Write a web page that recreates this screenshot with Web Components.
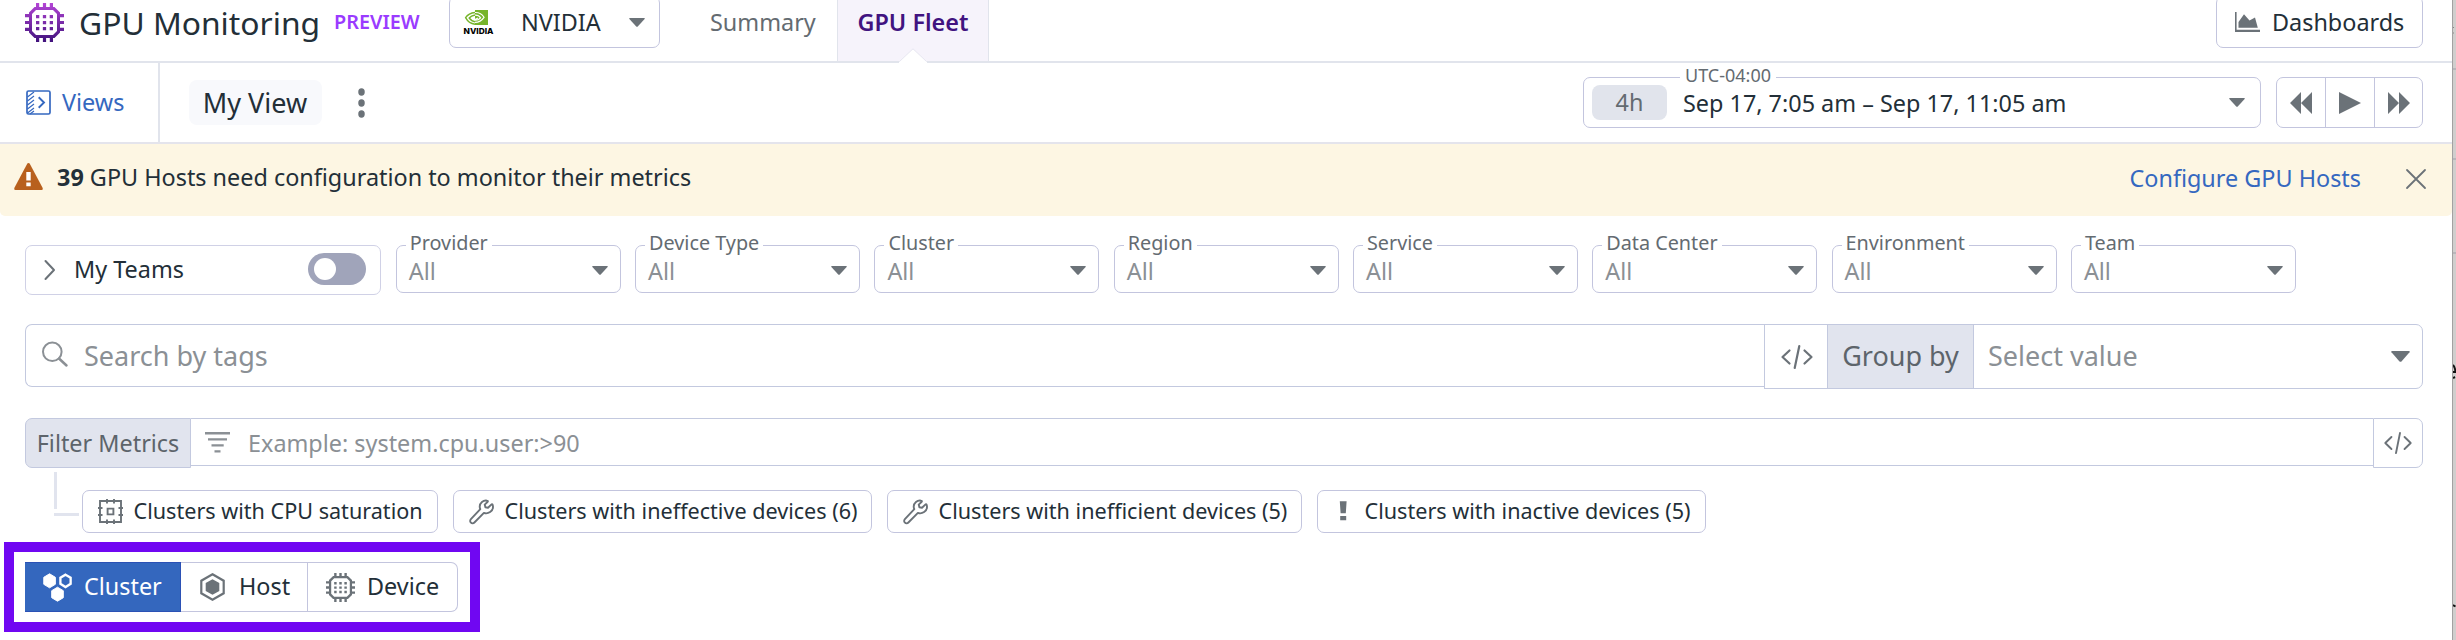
<!DOCTYPE html>
<html lang="en">
<head>
<meta charset="utf-8">
<title>GPU Monitoring</title>
<style>
html,body{margin:0;padding:0}
body{width:2456px;height:640px;overflow:hidden;background:#fff;color:#232f38;font-family:"Noto Sans","Open Sans",sans-serif;font-size:23.4px}
</style>
</head>
<body>
<gm-app></gm-app>
<script>
const ICONS = {
  chip: ['0 0 39 39', `<defs><linearGradient id="g" x1="0" y1="0" x2="0" y2="1" gradientUnits="objectBoundingBox"><stop offset="0" stop-color="#b445d6"/><stop offset="1" stop-color="#40127c"/></linearGradient></defs>
    <path fill="var(--chip-fill, url(#g))" fill-rule="evenodd" d="M11 0h3.2v4h3.7V0h3.2v4h3.7V0H28v4h1.5L35 9.500V11h4v3.200h-4v3.700h4v3.200h-4v3.700h4V28h-4v1.500L29.500 35H28v4h-3.200v-4h-3.700v4h-3.200v-4h-3.700v4H11v-4H9.500L4 29.500V28H0v-3.200h4v-3.700H0v-3.200h4v-3.700H0V11h4V9.500L9.500 4H11zM11 7L7 11v17l4 4h17l4-4V11l-4-4z
    M11 12h3.300v3.300H11zM17.850 12h3.300v3.300h-3.300zM24.700 12H28v3.300h-3.300zM11 18h3.300v3.300H11zM17.850 18h3.300v3.300h-3.300zM24.700 18H28v3.300h-3.300zM11 24h3.300v3.300H11zM17.850 24h3.300v3.300h-3.300zM24.700 24H28v3.300h-3.300z"/>`],
  nvidia: ['0 0 31 24', `<path fill="#76b42a" d="M12 0h13v15H12z"/><path d="M12 2.500C7 3 4 5.500 2.600 7.600 4.500 11.200 8 13.800 12 14.200" fill="none" stroke="#76b42a" stroke-width="1.400"/><path d="M12 5C8.800 5.500 7 7 6.200 8c1.400 2 3.200 3.400 5.800 3.700" fill="none" stroke="#76b42a" stroke-width="1.400"/><path d="M12 2.500c4.500-.2 7.500 2.300 9 4.800-2 3-5 5-9 5M12 5.200c3-.1 4.700 1.300 5.600 2.700-1.300 1.500-3.400 2.500-5.600 2.300M10 8l2 1.500L15 8" fill="none" stroke="#fff" stroke-width="1.200"/><text x="0.500" y="23.500" font-family="Inter,sans-serif" font-weight="800" font-size="8.200" fill="#000" textLength="30" lengthAdjust="spacingAndGlyphs">NVIDIA</text>`],
  caret: ['0 0 16 9', `<path fill="currentColor" d="M.8 0h14.400q1 .1.400 1L9 8.300q-1 1-2 0L.4 1Q-.2.1.8 0z"/>`],
  chart: ['0 0 25 20', `<path fill="currentColor" d="M0 0h1.600v17.800H25V20H0zM3.500 15.800V10L9 2.200l5.500 6.300L20 5.500l2.800 10.300z"/>`],
  views: ['0 0 25 25', `<rect x="1" y="1" width="23" height="23" rx="1.500" fill="none" stroke="currentColor" stroke-width="1.700"/><path d="M1.500 7l6.500-5M1.500 11l6.500-5M1.500 15L8 10M1.500 19L8 14M1.500 23L8 18M4 24l4-3" fill="none" stroke="currentColor" stroke-width="1.200"/><path d="M12.700 7.300l5.300 5.200-5.300 5.200" fill="none" stroke="currentColor" stroke-width="1.900"/>`],
  dots: ['0 0 8 30', `<g fill="currentColor"><circle cx="4" cy="4" r="3.700"/><circle cx="4" cy="15" r="3.700"/><circle cx="4" cy="26" r="3.700"/></g>`],
  rewind: ['0 0 22 22', `<path fill="currentColor" d="M11 0v22L0 11zM22 0v22L11 11z"/>`],
  play: ['0 0 22 22', `<path fill="currentColor" d="M0 0l22 11L0 22z"/>`],
  forward: ['0 0 22 22', `<path fill="currentColor" d="M0 0l11 11L0 22zM11 0l11 11-11 11z"/>`],
  warning: ['0 0 29 27', `<path fill="#b8601e" d="M14.500 0q.8 0 1.300.8L28.700 25q.6 2-1 2H1.300q-1.600 0-1-2L13.200.8Q13.700 0 14.500 0z"/><path fill="#fff" d="M12.300 9h4.400v8.500h-4.400zM12.300 19.500h4.400v3.800h-4.400z"/>`],
  close: ['0 0 20 20', `<path d="M1 1l18 18M19 1L1 19" stroke="currentColor" stroke-width="1.800" stroke-linecap="round"/>`],
  chevron: ['0 0 12 20', `<path d="M1.500 1l8.500 9-8.500 9" fill="none" stroke="currentColor" stroke-width="2" stroke-linecap="round" stroke-linejoin="round"/>`],
  search: ['0 0 26 26', `<circle cx="10.300" cy="10.800" r="9.300" fill="none" stroke="currentColor" stroke-width="2"/><path d="M17 17.500l7.500 7" stroke="currentColor" stroke-width="2.500" stroke-linecap="round"/>`],
  code: ['0 0 32 24', `<path d="M8.500 5.500L1.500 12l7 6.500M23.500 5.500l7 6.500-7 6.500M18.300 1l-4.600 22" fill="none" stroke="currentColor" stroke-width="2.200" stroke-linecap="round" stroke-linejoin="round"/>`],
  filter: ['0 0 25 21', `<path d="M0 0h25v2.400H0zM3 6.200h19v2.200H3zM6.500 12.300h12.200v2.200H6.500zM9.500 18.300h6v2.300h-6z" fill="currentColor"/>`],
  cpu: ['0 0 25 25', `<g fill="none" stroke="currentColor" stroke-width="1.900"><path d="M2 2h21v21H2z"/><path d="M9.600 9.600h5.800v5.800H9.600z"/><path d="M9 0v4.500M16 0v4.500M9 20.500V25M16 20.500V25M0 9h4.500M0 16h4.500M20.500 9H25M20.500 16H25"/></g>`],
  wrench: ['0 0 25 25', `<path d="M17.800 1.100C14 .4 10.600 3.300 10.500 7c0 1 .2 1.900.6 2.700L1.700 19.600c-1 1.100-1 2.600 0 3.500 1 1 2.500.9 3.500-.1l9.500-9.600c4.200 1.600 9.300-1.800 9.100-6.300l-.3-1.700c-.2-.7-.9-.8-1.400-.3l-3.300 3.200-2.600-.6-.7-2.600 3-2.900c.4-.5.100-1-.7-1.100z" transform="translate(.2 .5)" fill="none" stroke="currentColor" stroke-width="1.900" stroke-linejoin="round"/>`],
  bang: ['0 0 21 25', `<path fill="currentColor" d="M6.800 2.300h6.800l-.8 12H7.600zM7.200 17h6v4.300h-6z"/>`],
  cluster: ['0 0 30 29', `<g fill="currentColor" stroke="currentColor" stroke-width="1" stroke-linejoin="round"><path d="M6.800.8l6 3.500v7l-6 3.500-6-3.500v-7z"/><path d="M15 14.200l6 3.500v7l-6 3.500-6-3.500v-7z"/></g><path d="M23.300 1.700l5.300 3.100v6.100L23.300 14 18 10.900V4.800z" fill="none" stroke="currentColor" stroke-width="2.400"/>`],
  host: ['0 0 25 28', `<path d="M12.500 1.300l11.200 6.400v12.600l-11.200 6.400L1.300 20.300V7.700z" fill="none" stroke="currentColor" stroke-width="2.200"/><path fill="currentColor" d="M12.500 6.200l6.800 3.900v7.800l-6.800 3.900-6.800-3.900v-7.800z"/>`]
};

function define(name, render) {
  customElements.define(name, class extends HTMLElement {
    connectedCallback() {
      if (this.shadowRoot) return;
      this.attachShadow({ mode: 'open' }).innerHTML = render(n => this.getAttribute(n) || '');
    }
  });
}

define('gm-icon', a => {
  const [box, body] = ICONS[a('name')];
  return `<style>:host{display:block;flex:none;width:${a('w')}px;height:${a('h')}px;color:#6b7278}svg{display:block;width:100%;height:100%;overflow:visible}:host([tone=link]){color:#3568c0}:host([tone=light]){color:#fff}:host([tone=soft]){color:#8b9095}</style>
  <svg viewBox="${box}" preserveAspectRatio="none">${body}</svg>`;
});

/* single-line label; size, tone and weight are attributes */
define('gm-text', a => `<style>:host{display:block;flex:none;white-space:pre;font-size:${a('size') || 23.4}px;font-weight:${a('weight') || 400};line-height:1.4}:host([tone=muted]){color:#8b9095}:host([tone=grey]){color:#646b71}:host([tone=link]){color:#3568c0}</style><slot></slot>`);

define('gm-tab', a => `<style>
:host{display:flex;box-sizing:border-box;height:62px;position:relative;color:#646b71}
gm-text{margin-top:6px}
:host([active]){justify-content:center;background:#f6f3fb;border:1px solid #e1e4ec;border-top:0;color:#411380}
svg{display:none}
:host([active]) svg{display:block;position:absolute;left:61px;bottom:-2px}
</style><gm-text weight="${a('weight')}"><slot></slot></gm-text>
<svg width="28" height="15"><path d="M0 15v-1L14 .8 28 14v1z" fill="#fff"/><path d="M.5 13.500L14 .8l13.500 12.700" fill="none" stroke="#e6e6f0"/></svg>`);

define('gm-header', () => `<style>
:host{display:flex;box-sizing:border-box;height:63px;border-bottom:2px solid #e1e4ec;align-items:flex-start;padding-left:25px}
.c{display:flex;height:44px;align-items:center;width:424px}
.box{display:flex;box-sizing:border-box;align-items:center;height:52px;margin-top:-4px;border:1px solid #c3c5de;border-radius:7px}
.sel{width:211px;padding:0 14px 0 13px}
.sel gm-text{margin:0 auto 0 27px}
.dash{width:207px;margin-left:auto;margin-right:29px;padding-left:18px;gap:12px}
.pv{color:#9a3bff;margin-left:14px}
gm-tab:first-of-type{margin-left:50px;width:127px}
gm-tab[active]{width:152px}
.t{margin-left:15px;margin-top:3px}
</style>
<div class="c"><gm-icon name="chip" w="39" h="39"></gm-icon><gm-text class="t" size="31.8">GPU Monitoring</gm-text><gm-text class="pv" size="19.8" weight="600">PREVIEW</gm-text></div>
<div class="box sel"><gm-icon name="nvidia" w="31" h="24"></gm-icon><gm-text>NVIDIA</gm-text><gm-icon name="caret" w="16" h="9"></gm-icon></div>
<gm-tab>Summary</gm-tab><gm-tab active weight="600">GPU Fleet</gm-tab>
<div class="box dash"><gm-icon name="chart" w="25" h="20"></gm-icon><gm-text>Dashboards</gm-text></div>`);

define('gm-time-range', () => `<style>
:host{display:flex;box-sizing:border-box;align-items:center;position:relative;width:678px;height:51px;border:1px solid #c3c5de;border-radius:7px;padding:0 15px 0 8px}
.p{display:flex;align-items:center;justify-content:center;width:75px;height:35px;border-radius:8px;background:#e1e4ec}
.l{position:absolute;left:96px;top:-12px;height:20px;padding:0 5px;background:#fff;display:flex;align-items:center}
.d{margin:1px auto 0 16px}
</style><div class="l"><gm-text size="18" tone="grey">UTC-04:00</gm-text></div>
<div class="p"><gm-text tone="grey">4h</gm-text></div><gm-text class="d">Sep 17, 7:05 am – Sep 17, 11:05 am</gm-text><gm-icon name="caret" w="16" h="9"></gm-icon>`);

define('gm-transport', () => `<style>
:host{display:grid;grid-template-columns:repeat(3,1fr);box-sizing:border-box;width:147px;height:51px;border:1px solid #c3c5de;border-radius:7px}
div{display:flex;align-items:center;justify-content:center}div+div{border-left:1px solid #c3c5de}
div:first-child{padding-right:4px}div:last-child{padding-left:2px}
</style><div><gm-icon name="rewind" w="22" h="22"></gm-icon></div><div><gm-icon name="play" w="22" h="22"></gm-icon></div><div><gm-icon name="forward" w="22" h="22"></gm-icon></div>`);

define('gm-viewbar', () => `<style>
:host{display:flex;box-sizing:border-box;height:81px;border-bottom:2px solid #e4e4ec;align-items:center;padding-right:29px}
.v{display:flex;box-sizing:border-box;align-items:center;width:160px;height:100%;border-right:2px solid #e1e4ec;padding-left:26px;gap:11px}
.m{display:flex;box-sizing:border-box;align-items:center;justify-content:center;width:133px;height:45px;margin:0 36px 0 29px;padding-right:1px;border-radius:8px;background:#f8f9fc}
gm-time-range{margin-left:auto;margin-right:15px}
</style><div class="v"><gm-icon tone="link" name="views" w="25" h="25"></gm-icon><gm-text tone="link">Views</gm-text></div>
<div class="m"><gm-text size="27">My View</gm-text></div><gm-icon name="dots" w="7" h="30"></gm-icon>
<gm-time-range></gm-time-range><gm-transport></gm-transport>`);

define('gm-banner', () => `<style>
:host{display:flex;box-sizing:border-box;height:72px;background:#fdf6e3;border-radius:0 0 5px 5px;align-items:center;padding:0 26px 0 14px}
.w{margin-right:14px;margin-top:-7px}.m{margin-top:-6px}.l{margin:-3px 45px 0 auto}.x{margin-top:-2px}
</style><gm-icon class="w" name="warning" w="29" h="27"></gm-icon><gm-text class="m"><b>39</b> GPU Hosts need configuration to monitor their metrics</gm-text>
<gm-text class="l" tone="link">Configure GPU Hosts</gm-text><gm-icon class="x" name="close" w="20" h="20"></gm-icon>`);

define('gm-teams', () => `<style>
:host{display:flex;box-sizing:border-box;align-items:center;width:356px;height:50px;border:1px solid #d0d1e6;border-radius:7px;padding:0 14px 0 18px}
gm-text{margin:-1px auto 0 18px}
.t{width:58px;height:32px;border-radius:16px;background:#a0a4ba;display:flex;align-items:center;padding-left:6px;box-sizing:border-box;margin-top:-2px}
.t i{width:22px;height:22px;border-radius:50%;background:#fff}
</style><gm-icon name="chevron" w="12" h="20"></gm-icon><gm-text><slot></slot></gm-text><div class="t"><i></i></div>`);

define('gm-select', a => `<style>
:host{display:flex;box-sizing:border-box;align-items:center;justify-content:space-between;position:relative;width:225px;height:48px;border:1px solid #c3c5de;border-radius:7px;padding:3px 12px 0 12px}
.l{position:absolute;left:9px;top:-14px;height:22px;padding:0 4px;background:#fff;display:flex;align-items:center}
.a{margin-top:1px}
gm-icon{margin-top:-1px}
</style><div class="l"><gm-text size="19.8" tone="grey">${a('label')}</gm-text></div><gm-text class="a" tone="muted">All</gm-text><gm-icon name="caret" w="16" h="9"></gm-icon>`);

define('gm-filters', () => `<style>
:host{display:flex;align-items:flex-start;height:50px;gap:14.300px;padding-left:25px;margin-top:29px}
gm-teams{margin-right:.5px}
</style><gm-teams>My Teams</gm-teams>` + ['Provider', 'Device Type', 'Cluster', 'Region', 'Service', 'Data Center', 'Environment', 'Team'].map(l => `<gm-select label="${l}"></gm-select>`).join(''));

define('gm-search', () => `<style>
:host{display:flex;align-items:flex-start;height:65px;margin:29px 29px 0 25px}
div{display:flex;box-sizing:border-box;align-items:center;border:1px solid #c3c9df;height:65px}
.s{width:1739px;height:63px;border-radius:7px 0 0 7px;border-right:0;padding-left:16px;gap:16px}
.s gm-icon{margin-top:-4px}
.c{width:64px;justify-content:center;padding-left:2px}
.g{width:147px;background:#e1e4ee;margin-left:-1px;justify-content:center;color:#5d646b}
.g gm-text,.v gm-text{margin-top:-2px}
.v{flex:1;margin-left:-1px;border-radius:0 7px 7px 0;padding:0 12px 0 14px;justify-content:space-between}
</style><div class="s"><gm-icon tone="soft" name="search" w="26" h="26"></gm-icon><gm-text tone="muted" size="27">Search by tags</gm-text></div>
<div class="c"><gm-icon name="code" w="32" h="24"></gm-icon></div><div class="g"><gm-text size="27">Group by</gm-text></div>
<div class="v"><gm-text size="27" tone="muted">Select value</gm-text><gm-icon name="caret" w="19" h="11"></gm-icon></div>`);

define('gm-metric-filter', () => `<style>
:host{display:flex;align-items:flex-start;height:50px;margin:29px 29px 0 25px}
div{display:flex;box-sizing:border-box;align-items:center;border:1px solid #c3c9df;height:50px}
.l{width:166px;background:#e1e4ee;border-radius:7px 0 0 7px;justify-content:center;color:#5d646b}
.i{flex:1;height:48px;border-left:0;border-right:0;padding-left:14px;gap:18px}
.i gm-text{margin-top:2px}
.c{width:50px;justify-content:center;border-radius:0 7px 7px 0}
</style><div class="l"><gm-text>Filter Metrics</gm-text></div><div class="i"><gm-icon tone="soft" name="filter" w="25" h="21"></gm-icon><gm-text tone="muted">Example: system.cpu.user:&gt;90</gm-text></div><div class="c"><gm-icon name="code" w="28" h="22"></gm-icon></div>`);

define('gm-chip', a => `<style>
:host{display:flex;box-sizing:border-box;align-items:center;width:${a('w')}px;height:43px;border:1px solid #c3c5de;border-radius:7px;padding-left:15px;gap:10.500px}
gm-text{margin-top:-1px}
</style><gm-icon name="${a('icon')}" w="${a('icon') === 'bang' ? 21 : 25}" h="25"></gm-icon><gm-text size="21.6"><slot></slot></gm-text>`);

define('gm-chips', () => `<style>
:host{display:flex;align-items:flex-start;height:43px;gap:15px;margin-top:22px;padding-left:54px}
.k{display:flex;flex-direction:column;gap:4px;margin-right:-12px;margin-top:-18px;width:25px}
.k i{display:block;background:#e1e4ee}.k i:first-child{width:3px;height:37px}.k i:last-child{width:25px;height:3px}
</style><div class="k"><i></i><i></i></div>
<gm-chip w="356" icon="cpu">Clusters with CPU saturation</gm-chip><gm-chip w="419" icon="wrench">Clusters with ineffective devices (6)</gm-chip><gm-chip w="415" icon="wrench">Clusters with inefficient devices (5)</gm-chip><gm-chip w="389" icon="bang">Clusters with inactive devices (5)</gm-chip>`);

define('gm-segment', a => `<style>
:host{display:flex;box-sizing:border-box;align-items:center;height:50px;border:1px solid #c3c5de;--chip-fill:#6b7278;width:${a('w')}px;padding-left:${a('pad')}px;gap:${a('gap')}px}
:host([active]){background:#3467be;border-color:#2b51b5;color:#fff}
:host(:first-child){border-radius:7px 0 0 7px}:host(:last-child){border-radius:0 7px 7px 0}:host(:not(:first-child)){border-left-width:0}
gm-text{margin-top:-1px}
</style><gm-icon name="${a('icon')}" tone="${a('tone')}" w="${a('iw')}" h="${a('ih')}"></gm-icon><gm-text><slot></slot></gm-text>`);

define('gm-scope', () => `<style>
:host{display:flex;box-sizing:border-box;width:476px;height:90px;border:10px solid #7007f2;margin:9px 0 0 4px;padding:10px 11px}
</style><gm-segment active tone="light" icon="cluster" w="156" pad="18" gap="12" iw="29" ih="29">Cluster</gm-segment><gm-segment icon="host" w="127" pad="19" gap="14" iw="25" ih="28">Host</gm-segment><gm-segment icon="chip" w="150" pad="18" gap="12" iw="29" ih="29">Device</gm-segment>`);

/* the few pixels of the page behind this panel */
define('gm-edge', () => `<style>:host{display:block;height:640px;background:#d0cecd;overflow:hidden;box-sizing:border-box;border-left:1px solid #a3a1a1}svg{display:block}</style>
<svg width="3" height="640"><path d="M0 69h3M0 159h3M0 253h3" stroke="#b0afb5" stroke-width="1.500"/><path d="M0 365Q2 367 2.500 372H0M0 378l2-1" stroke="#111" stroke-width="2" fill="none"/><path d="M0 605l2.500 1.500" stroke="#111" stroke-width="2"/><path d="M0 27l1 1M0 33h1" stroke="#888"/></svg>`);

define('gm-app', () => `<style>
:host{display:grid;grid-template-columns:2452px 4px;width:2456px;height:640px;overflow:hidden}
main{display:flex;flex-direction:column}
</style><main><gm-header></gm-header><gm-viewbar></gm-viewbar><gm-banner></gm-banner><gm-filters></gm-filters><gm-search></gm-search><gm-metric-filter></gm-metric-filter><gm-chips></gm-chips><gm-scope></gm-scope></main><gm-edge></gm-edge>`);
</script>
</body>
</html>
